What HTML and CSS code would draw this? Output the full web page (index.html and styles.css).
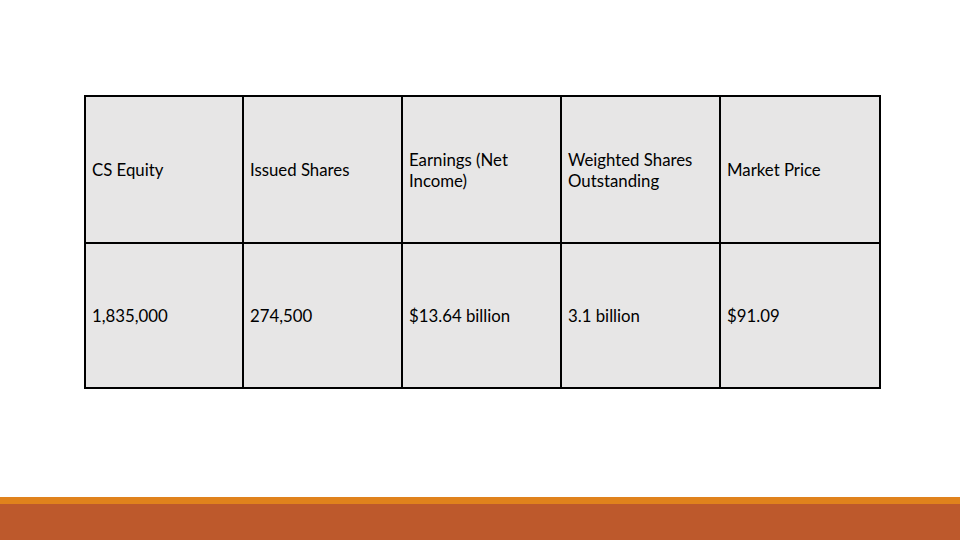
FILE: index.html
```html
<!DOCTYPE html>
<html>
<head>
<meta charset="utf-8">
<link rel="stylesheet" href="styles.css">
</head>
<body>
<main class="slide">
  <div class="grid">
    <div class="cell">CS Equity</div>
    <div class="cell">Issued Shares</div>
    <div class="cell">Earnings (Net Income)</div>
    <div class="cell">Weighted Shares Outstanding</div>
    <div class="cell">Market Price</div>
    <div class="cell">1,835,000</div>
    <div class="cell">274,500</div>
    <div class="cell">$13.64 billion</div>
    <div class="cell">3.1 billion</div>
    <div class="cell">$91.09</div>
  </div>
</main>
<footer class="footer">
  <div class="stripe"></div>
  <div class="band"></div>
</footer>
</body>
</html>
```
FILE: styles.css
```css
html, body {
  margin: 0;
  padding: 0;
}
body {
  width: 960px;
  height: 540px;
  background: #ffffff;
  display: flex;
  flex-direction: column;
  font-family: Lato, "Open Sans", sans-serif;
  overflow: hidden;
}
.slide {
  flex: 1;
  padding: 95px 0 0 84px;
}
.grid {
  display: grid;
  grid-template-columns: 156px 157px 157px 157px 158px;
  grid-template-rows: 145px 143px;
  gap: 2px;
  padding: 2px;
  background: #000;
  width: max-content;
}
.cell {
  background: #e7e6e6;
  color: #000;
  font-size: 16.8px;
  line-height: 21px;
  display: flex;
  align-items: center;
  padding: 0 10px 0 6px;
}
.footer {
  height: 43px;
  display: flex;
  flex-direction: column;
}
.stripe {
  height: 7px;
  background: #e0821c;
}
.band {
  flex: 1;
  background: #bd592c;
}
```
